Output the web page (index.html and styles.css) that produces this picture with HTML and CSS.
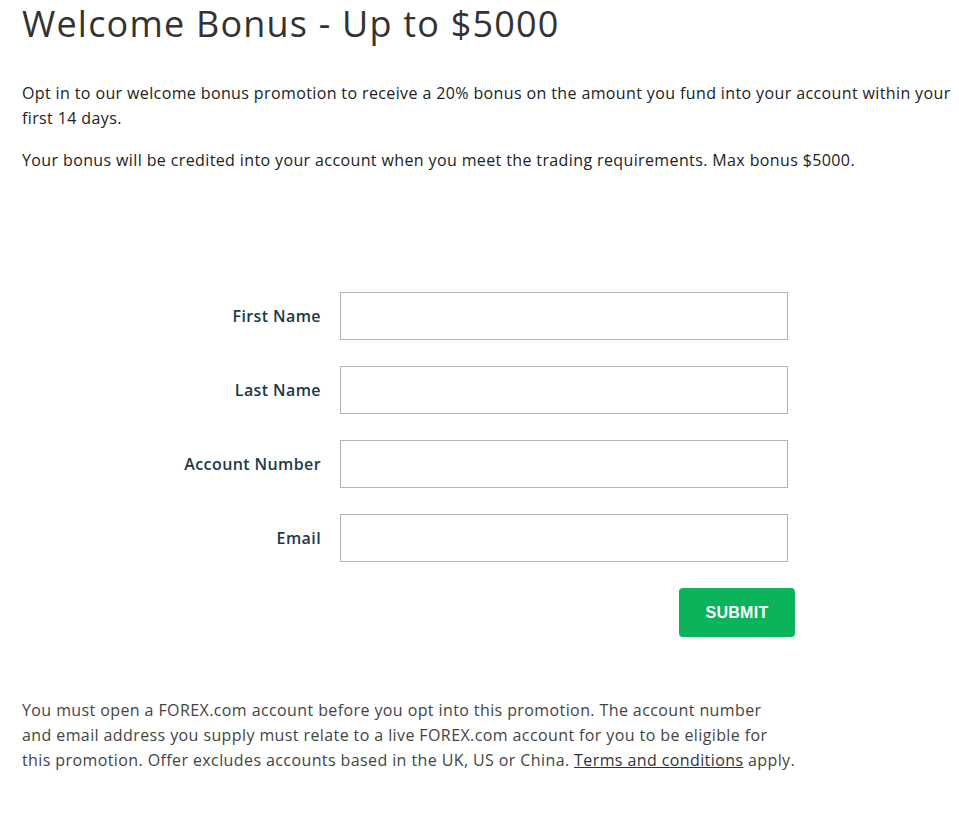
FILE: index.html
```html
<!DOCTYPE html>
<html lang="en">
<head>
<meta charset="utf-8">
<title>Welcome Bonus</title>
<link rel="stylesheet" href="styles.css">
</head>
<body>
<main class="page">
  <h1 class="title">Welcome Bonus - Up to $5000</h1>
  <p class="intro">Opt in to our welcome bonus promotion to receive a 20% bonus on the amount you fund into your account within your first 14 days.</p>
  <p class="intro">Your bonus will be credited into your account when you meet the trading requirements. Max bonus $5000.</p>

  <form class="optin">
    <label class="label" for="fn">First Name</label>
    <input class="field" id="fn" type="text">
    <label class="label" for="ln">Last Name</label>
    <input class="field" id="ln" type="text">
    <label class="label" for="an">Account Number</label>
    <input class="field" id="an" type="text">
    <label class="label" for="em">Email</label>
    <input class="field" id="em" type="email">
    <button class="submit" type="button">SUBMIT</button>
  </form>

  <p class="disclaimer">You must open a FOREX.com account before you opt into this promotion. The account number<br>
  and email address you supply must relate to a live FOREX.com account for you to be eligible for<br>
  this promotion. Offer excludes accounts based in the UK, US or China. <a class="terms" href="#">Terms and conditions</a> apply.</p>
</main>
</body>
</html>
```

FILE: styles.css
```css
html, body {
  margin: 0;
  padding: 0;
  background: #fff;
}

body {
  font-family: "Open Sans", "Liberation Sans", sans-serif;
  color: #222;
}

.page {
  padding: 1px 8px 0 22px;
}

.title {
  margin: 0;
  font-size: 36px;
  font-weight: 400;
  line-height: 46px;
  letter-spacing: 1.2px;
  color: #333;
}

.intro {
  margin: 0;
  font-size: 16px;
  line-height: 25px;
  letter-spacing: 0.38px;
  color: #222;
}

.title + .intro {
  margin-top: 34px;
}

.intro + .intro {
  margin-top: 17px;
}

.optin {
  display: grid;
  grid-template-columns: 299px 448px;
  column-gap: 19px;
  row-gap: 26px;
  margin-top: 119px;
  align-items: center;
}

.label {
  grid-column: 1;
  text-align: right;
  font-size: 16px;
  font-weight: 600;
  letter-spacing: 0.4px;
  color: #1a3a48;
}

.field {
  grid-column: 2;
  box-sizing: border-box;
  width: 448px;
  height: 48px;
  margin: 0;
  border: 1px solid #b3b3b3;
  border-radius: 0;
  background: #fff;
  font: inherit;
  padding: 0 12px;
}

.submit {
  grid-column: 2;
  justify-self: end;
  margin-right: -7px;
  width: 116px;
  height: 49px;
  border: 0;
  border-radius: 4px;
  background: #0bb35b;
  color: #fff;
  font-family: "Liberation Sans", Arial, sans-serif;
  font-weight: 700;
  font-size: 16px;
  letter-spacing: 0.3px;
  cursor: pointer;
}

.disclaimer {
  margin: 61px 0 0;
  max-width: 820px;
  font-size: 16px;
  line-height: 25px;
  letter-spacing: 0.4px;
  color: #444;
}

.terms {
  color: #333;
  text-decoration: underline;
}
```
